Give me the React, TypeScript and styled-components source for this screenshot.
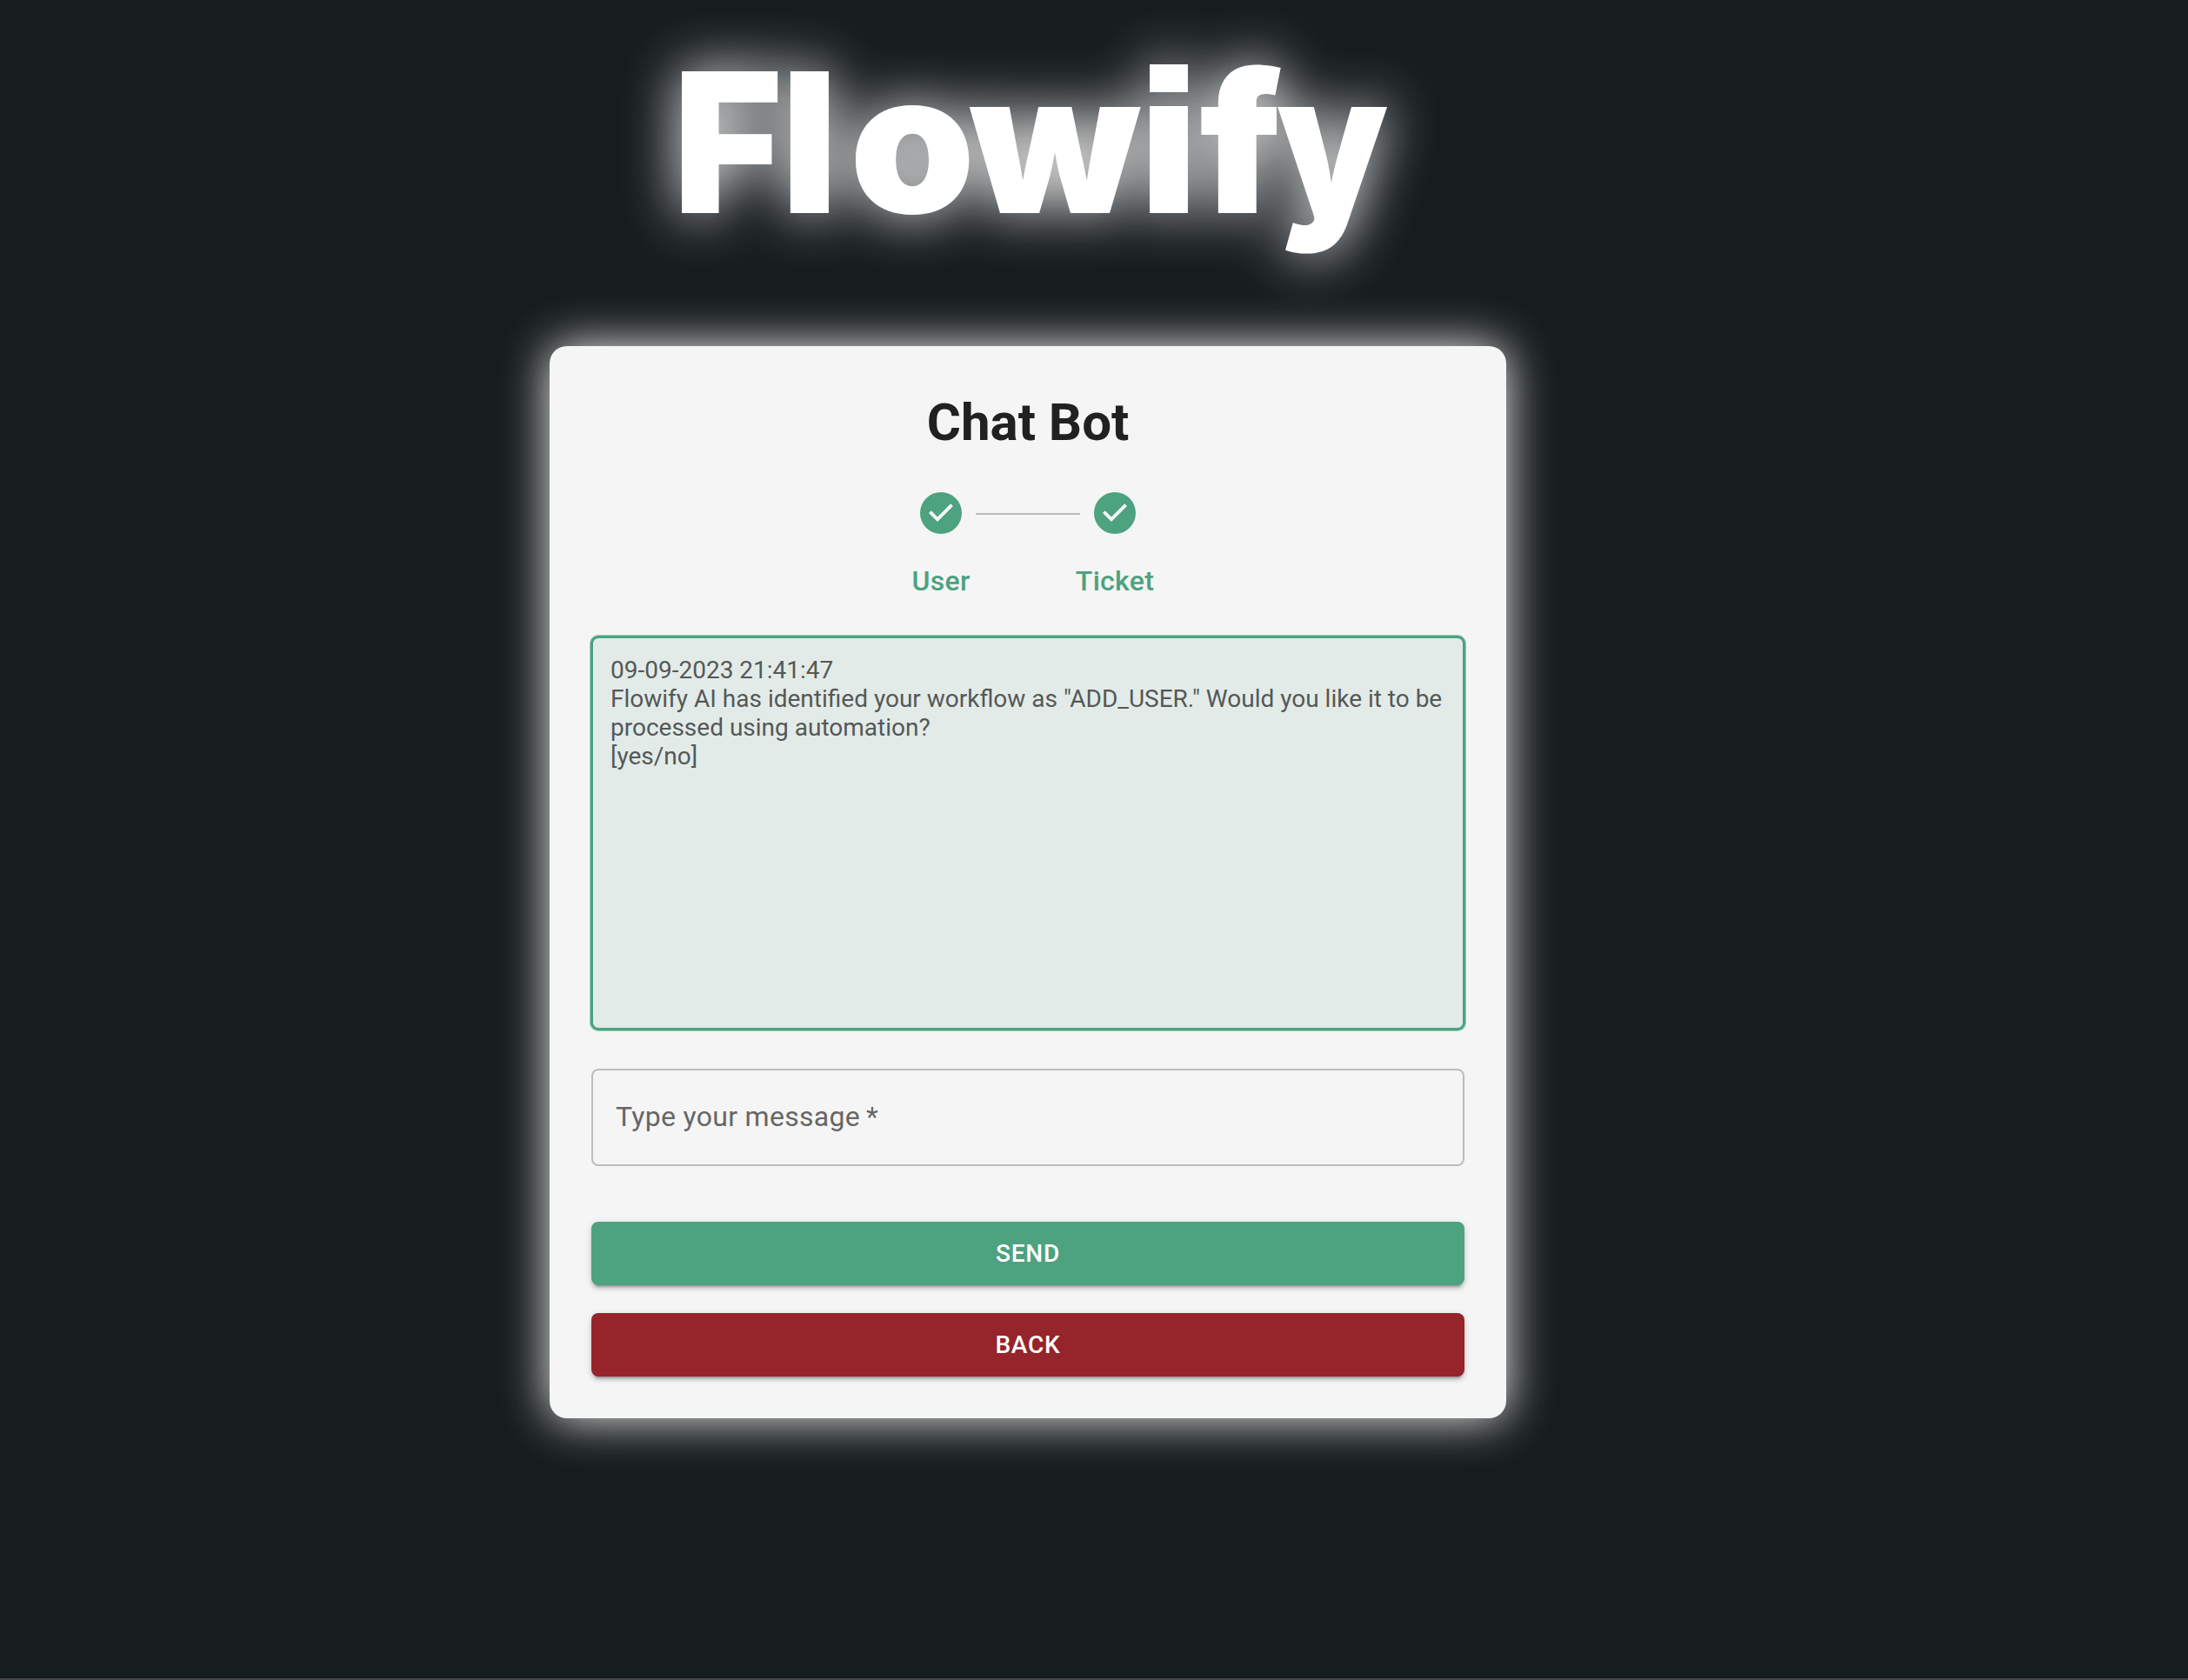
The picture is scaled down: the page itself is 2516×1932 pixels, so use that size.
import React from "react";
import styled, { createGlobalStyle } from "styled-components";

const GlobalStyle = createGlobalStyle`
  *, *::before, *::after { box-sizing: border-box; }
  body {
    margin: 0;
    background: #171c1f;
    font-family: Roboto, "Liberation Sans", sans-serif;
    -webkit-font-smoothing: antialiased;
  }
`;

const Page = styled.div`
  height: 1932px;
  padding-right: 152px;
  display: flex;
  flex-direction: column;
  align-items: center;
  border-bottom: 2px solid #464646;
  overflow: hidden;
`;

const Brand = styled.h1`
  margin: 0;
  height: 398px;
  width: 838px;
  font-family: Inter, sans-serif;
  font-weight: 900;
  font-size: 224px;
  line-height: 327px;
  color: #fff;
  white-space: nowrap;
  filter: drop-shadow(0 0 32px #f5f5f5);
`;

const Letter = styled.span<{ $shift?: number; $stretch?: number; $square?: boolean }>`
  display: inline-block;
  height: 327px;
  margin-left: ${(p) => p.$shift ?? 0}px;
  transform: scaleX(${(p) => p.$stretch ?? 1});
  transform-origin: left;
  ${(p) => p.$square && 'font-family: "DejaVu Sans", sans-serif;'}
`;

const Card = styled.main`
  width: 1100px;
  height: 1233px;
  padding: 53px 48px 48px;
  display: flex;
  flex-direction: column;
  border-radius: 20px;
  background: #f5f5f5;
  box-shadow: 0 0 54px #f0f0ee;
`;

const Heading = styled.h2`
  margin: 0;
  font-size: 60px;
  font-weight: 700;
  line-height: 70px;
  text-align: center;
  color: #212121;
`;

const Stepper = styled.div`
  margin-top: 45px;
  display: flex;
  justify-content: center;
  align-items: flex-start;
`;

const Step = styled.div`
  width: 80px;
  display: flex;
  flex-direction: column;
  align-items: center;
`;

const StepIcon = styled.svg`
  width: 48px;
  height: 48px;
  fill: #4da280;
`;

const StepLabel = styled.span`
  margin-top: 31px;
  font-size: 32px;
  font-weight: 500;
  line-height: 46px;
  letter-spacing: 0.3px;
  color: #4da280;
`;

const Connector = styled.div`
  width: 120px;
  height: 2px;
  margin: 24px 0 0;
  background: #bdbdbd;
`;

const Transcript = styled.div`
  height: 452px;
  margin-top: 41px;
  padding: 20px;
  border: 2px solid #4da280;
  border-radius: 8px;
  background: #e2ebe8;
  box-shadow: 0 0 0 1px #4da280, 0 0 0 2px rgba(77, 162, 128, 0.55);
  font-size: 28px;
  line-height: 33px;
  color: #555857;
  white-space: pre-wrap;
`;

const Field = styled.div`
  height: 112px;
  margin-top: 45px;
  padding: 0 26px 2px;
  display: flex;
  align-items: center;
  border: 2px solid #bdbdbd;
  border-radius: 8px;
  font-size: 32px;
  letter-spacing: 0.3px;
  color: #666;
`;

const Actions = styled.div`
  margin-top: 64px;
  display: flex;
  flex-direction: column;
  gap: 32px;
`;

const Button = styled.button<{ $color: string }>`
  height: 73px;
  padding: 0;
  border: 0;
  border-radius: 8px;
  background: ${(p) => p.$color};
  color: #fff;
  font: 500 28px/49px Roboto, "Liberation Sans", sans-serif;
  letter-spacing: 0.8px;
  text-transform: uppercase;
  box-shadow: 0 6px 2px -4px rgba(0, 0, 0, 0.2), 0 4px 4px rgba(0, 0, 0, 0.14),
    0 2px 10px rgba(0, 0, 0, 0.12);
`;

const CompletedStep = ({ label }: { label: string }) => (
  <Step>
    <StepIcon viewBox="0 0 24 24">
      <path d="M12 0a12 12 0 1 0 0 24 12 12 0 0 0 0-24zm-2 17l-5-5 1.4-1.4 3.6 3.6 7.6-7.6L19 8l-9 9z" />
    </StepIcon>
    <StepLabel>{label}</StepLabel>
  </Step>
);

const transcript = `09-09-2023 21:41:47
Flowify AI has identified your workflow as "ADD_USER." Would you like it to be processed using automation?
[yes/no]`;

export default function App() {
  return (
    <>
      <GlobalStyle />
      <Page>
        <Brand>
          <Letter $shift={11} $stretch={0.96}>F</Letter>
          <Letter $shift={-7}>l</Letter>
          <Letter $shift={13} $stretch={1.03}>o</Letter>
          <Letter $shift={-2}>w</Letter>
          <Letter $shift={-11} $stretch={1.12} $square>i</Letter>
          <Letter $shift={2}>f</Letter>
          <Letter $shift={-6} $stretch={0.9}>y</Letter>
        </Brand>
        <Card>
          <Heading>Chat Bot</Heading>
          <Stepper>
            <CompletedStep label="User" />
            <Connector />
            <CompletedStep label="Ticket" />
          </Stepper>
          <Transcript>{transcript}</Transcript>
          <Field>Type your message{"\u2009"}*</Field>
          <Actions>
            <Button $color="#4da280">Send</Button>
            <Button $color="#96242b">Back</Button>
          </Actions>
        </Card>
      </Page>
    </>
  );
}
